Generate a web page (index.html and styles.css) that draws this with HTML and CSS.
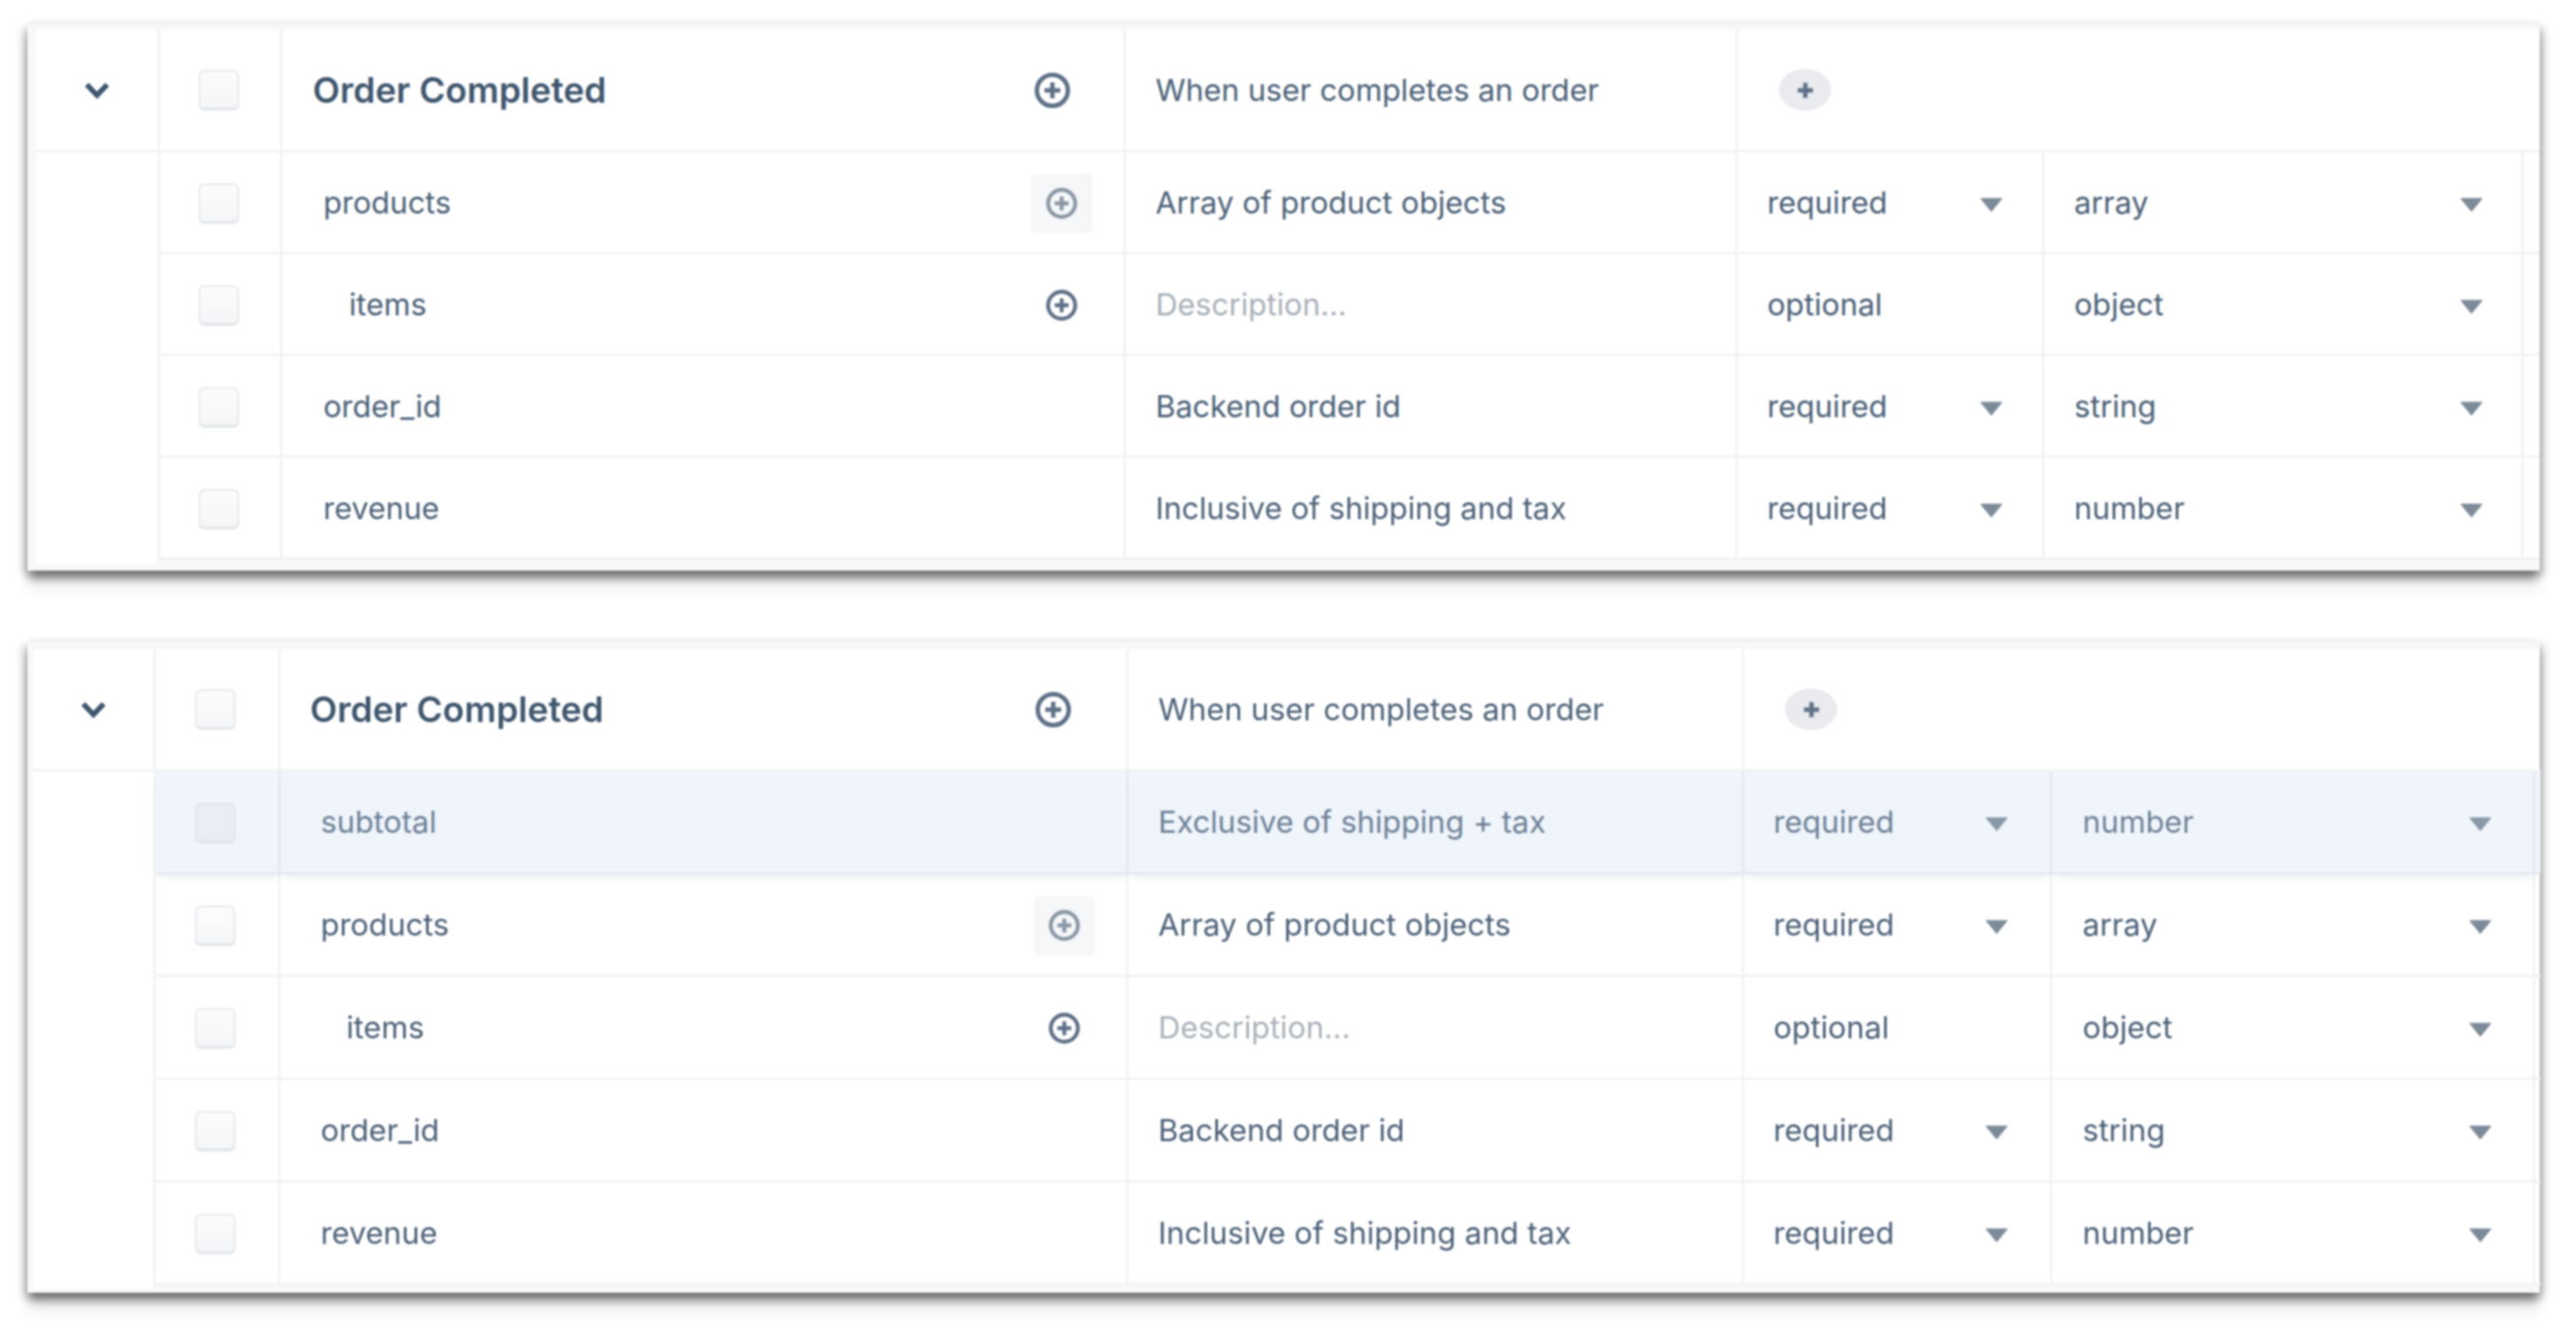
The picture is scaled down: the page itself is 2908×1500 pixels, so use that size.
FILE: index.html
```html
<!DOCTYPE html>
<html lang="en">
<head>
<meta charset="utf-8">
<title>Order Completed</title>
<link rel="stylesheet" href="styles.css">
</head>
<body>
<svg class="defs" width="0" height="0" aria-hidden="true">
  <symbol id="plus" viewBox="0 0 40 40">
    <circle cx="20" cy="20" r="17.5" fill="none" stroke="currentColor" stroke-width="5"/>
    <path d="M20 11v18M11 20h18" fill="none" stroke="currentColor" stroke-width="5"/>
  </symbol>
  <symbol id="cross" viewBox="0 0 18 18">
    <path d="M9 0.500v17M0.500 9h17" fill="none" stroke="currentColor" stroke-width="5"/>
  </symbol>
  <symbol id="chev" viewBox="0 0 29 20">
    <path d="M3 3.500l11.500 12L26 3.500" fill="none" stroke="currentColor" stroke-width="6"/>
  </symbol>
  <symbol id="tri" viewBox="0 0 24 15">
    <path d="M1 1h22L12 14.500z" fill="currentColor" stroke="currentColor" stroke-width="1" stroke-linejoin="round"/>
  </symbol>
</svg>
<main class="page">
  <section class="card card-a">
    <div class="row head">
      <div class="cell c-toggle"><svg class="chev"><use href="#chev"/></svg></div>
      <div class="cell c-check"><span class="box"></span></div>
      <div class="cell c-name"><span class="title">Order Completed</span><svg class="add add-lg"><use href="#plus"/></svg></div>
      <div class="cell c-head-desc">When user completes an order</div>
      <div class="cell c-tags"><span class="pill"><svg class="cross"><use href="#cross"/></svg></span></div>
    </div>
    <div class="row prop">
      <div class="cell c-toggle"></div>
      <div class="cell c-check"><span class="box"></span></div>
      <div class="cell c-name"><span class="pname">products</span><span class="add-btn"><svg class="add"><use href="#plus"/></svg></span></div>
      <div class="cell c-desc">Array of product objects</div>
      <div class="cell c-req">required<svg class="tri"><use href="#tri"/></svg></div>
      <div class="cell c-type">array<svg class="tri"><use href="#tri"/></svg></div>
      <div class="cell c-tail"></div>
    </div>
    <div class="row prop">
      <div class="cell c-toggle"></div>
      <div class="cell c-check"><span class="box"></span></div>
      <div class="cell c-name"><span class="pname nested">items</span><svg class="add add-row"><use href="#plus"/></svg></div>
      <div class="cell c-desc placeholder">Description...</div>
      <div class="cell c-req">optional</div>
      <div class="cell c-type">object<svg class="tri"><use href="#tri"/></svg></div>
      <div class="cell c-tail"></div>
    </div>
    <div class="row prop">
      <div class="cell c-toggle"></div>
      <div class="cell c-check"><span class="box"></span></div>
      <div class="cell c-name"><span class="pname">order_id</span></div>
      <div class="cell c-desc">Backend order id</div>
      <div class="cell c-req">required<svg class="tri"><use href="#tri"/></svg></div>
      <div class="cell c-type">string<svg class="tri"><use href="#tri"/></svg></div>
      <div class="cell c-tail"></div>
    </div>
    <div class="row prop">
      <div class="cell c-toggle"></div>
      <div class="cell c-check"><span class="box"></span></div>
      <div class="cell c-name"><span class="pname">revenue</span></div>
      <div class="cell c-desc">Inclusive of shipping and tax</div>
      <div class="cell c-req">required<svg class="tri"><use href="#tri"/></svg></div>
      <div class="cell c-type">number<svg class="tri"><use href="#tri"/></svg></div>
      <div class="cell c-tail"></div>
    </div>
  </section>

  <section class="card card-b">
    <div class="row head">
      <div class="cell c-toggle"><svg class="chev"><use href="#chev"/></svg></div>
      <div class="cell c-check"><span class="box"></span></div>
      <div class="cell c-name"><span class="title">Order Completed</span><svg class="add add-lg"><use href="#plus"/></svg></div>
      <div class="cell c-head-desc">When user completes an order</div>
      <div class="cell c-tags"><span class="pill"><svg class="cross"><use href="#cross"/></svg></span></div>
    </div>
    <div class="row prop active">
      <div class="cell c-toggle"></div>
      <div class="cell c-check"><span class="box"></span></div>
      <div class="cell c-name"><span class="pname">subtotal</span></div>
      <div class="cell c-desc">Exclusive of shipping + tax</div>
      <div class="cell c-req">required<svg class="tri"><use href="#tri"/></svg></div>
      <div class="cell c-type">number<svg class="tri"><use href="#tri"/></svg></div>
      <div class="cell c-tail"></div>
    </div>
    <div class="row prop">
      <div class="cell c-toggle"></div>
      <div class="cell c-check"><span class="box"></span></div>
      <div class="cell c-name"><span class="pname">products</span><span class="add-btn"><svg class="add"><use href="#plus"/></svg></span></div>
      <div class="cell c-desc">Array of product objects</div>
      <div class="cell c-req">required<svg class="tri"><use href="#tri"/></svg></div>
      <div class="cell c-type">array<svg class="tri"><use href="#tri"/></svg></div>
      <div class="cell c-tail"></div>
    </div>
    <div class="row prop">
      <div class="cell c-toggle"></div>
      <div class="cell c-check"><span class="box"></span></div>
      <div class="cell c-name"><span class="pname nested">items</span><svg class="add add-row"><use href="#plus"/></svg></div>
      <div class="cell c-desc placeholder">Description...</div>
      <div class="cell c-req">optional</div>
      <div class="cell c-type">object<svg class="tri"><use href="#tri"/></svg></div>
      <div class="cell c-tail"></div>
    </div>
    <div class="row prop">
      <div class="cell c-toggle"></div>
      <div class="cell c-check"><span class="box"></span></div>
      <div class="cell c-name"><span class="pname">order_id</span></div>
      <div class="cell c-desc">Backend order id</div>
      <div class="cell c-req">required<svg class="tri"><use href="#tri"/></svg></div>
      <div class="cell c-type">string<svg class="tri"><use href="#tri"/></svg></div>
      <div class="cell c-tail"></div>
    </div>
    <div class="row prop">
      <div class="cell c-toggle"></div>
      <div class="cell c-check"><span class="box"></span></div>
      <div class="cell c-name"><span class="pname">revenue</span></div>
      <div class="cell c-desc">Inclusive of shipping and tax</div>
      <div class="cell c-req">required<svg class="tri"><use href="#tri"/></svg></div>
      <div class="cell c-type">number<svg class="tri"><use href="#tri"/></svg></div>
      <div class="cell c-tail"></div>
    </div>
  </section>
</main>
</body>
</html>
```
FILE: styles.css
```css
* { box-sizing: border-box; }
html, body { margin: 0; background: #fff; }
body {
  width: 2908px;
  height: 1500px;
  overflow: hidden;
  font-family: Inter, "Liberation Sans", sans-serif;
  color: #4a5f76;
}
.defs { position: absolute; }
.page {
  padding: 26px 41px 0 31px;
  display: flex;
  flex-direction: column;
  gap: 79px;
  filter: blur(0.8px);
}
.card {
  background: #f7f9f9;
  border-top: 2px solid #f1f2f2;
  box-shadow:
    -5px 5px 9px rgba(50, 50, 50, .24),
    5px 5px 9px rgba(50, 50, 50, .24),
    0 11px 10px -2px rgba(50, 50, 50, .46),
    0 22px 14px rgba(60, 60, 60, .07),
    0 -5px 5px rgba(0, 0, 0, .02);
}
.card-a {
  --cols: 140px 138px 952px 691px 346px 541px 18px;
  --row-h: 115px;
  --row-top: 3px;
  --name-x: 46px;
  --desc-x: 33.5px;
  --req-x: 33px;
  --type-x: 33.5px;
  --req-end: 44.5px;
  --type-end: 43.5px;
  --head-x: 34px;
  --head-end: 60px;
  --head-lift: 0px;
  --check-end: 3px;
  padding: 6px 0 12px 10px;
  font-size: 34.4px;
}
.card-b {
  --cols: 138px 141px 957px 695px 348px 545px 6px;
  --row-h: 116px;
  --row-top: 2px;
  --name-x: 45px;
  --desc-x: 33.5px;
  --req-x: 33px;
  --type-x: 34px;
  --req-end: 47px;
  --type-end: 46px;
  --head-x: 33px;
  --head-end: 62px;
  --head-lift: 2px;
  --check-end: 5px;
  padding: 8px 0 8px 7px;
  font-size: 34.6px;
}
.row {
  display: grid;
  grid-template-columns: var(--cols);
  height: var(--row-h);
  background: #fff;
}
.row.head { height: 138px; }
.cell {
  display: flex;
  align-items: center;
  min-width: 0;
  border-right: 3px solid #f1f3f5;
  border-bottom: 3px solid #f1f3f5;
}
.prop .cell { padding-top: var(--row-top); }
.c-toggle { justify-content: center; color: #3f566d; }
.prop .c-toggle { border-bottom: none; background: #fff; }
.prop:last-child .c-toggle { margin-bottom: -4px; }
.c-check { justify-content: center; padding-right: var(--check-end); }
.c-name { justify-content: space-between; padding-left: var(--name-x); padding-right: 35px; }
.head .c-name { padding-left: var(--head-x); padding-right: var(--head-end); }
.c-desc, .c-head-desc { padding-left: var(--desc-x); }
.c-head-desc { padding-bottom: var(--head-lift); }
.c-desc, .c-req, .c-type, .pname { padding-bottom: 3px; }
.c-req { padding-left: var(--req-x); justify-content: space-between; padding-right: var(--req-end); }
.c-type { padding-left: var(--type-x); justify-content: space-between; padding-right: var(--type-end); }
.c-tail { border-right: none; }
.c-tags { grid-column: 5 / -1; border-right: none; padding-left: 46px; }
.title { font-size: 40px; font-weight: 600; color: #3f566d; }
.nested { margin-left: 29px; }
.placeholder { color: #a9b0b8; }
.box {
  display: block;
  width: 46px;
  height: 46px;
  border: 2px solid #e6e9ec;
  border-bottom-width: 4px;
  border-radius: 7px;
  background: linear-gradient(#fcfcfd, #f5f6f8);
}
.add { display: block; width: 35px; height: 35px; color: #5f7187; }
.add-lg { width: 40px; height: 40px; }
.add-row { margin-right: 17px; }
.add-btn {
  display: flex;
  align-items: center;
  justify-content: center;
  width: 69px;
  height: 68px;
  border-radius: 6px;
  background: #f5f7f9;
}
.add-btn .add { color: #8b97a5; }
.chev { display: block; width: 29px; height: 20px; }
.tri { display: block; width: 26px; height: 16px; margin-top: 6px; color: #7d8b99; }
.pill {
  display: flex;
  align-items: center;
  justify-content: center;
  width: 59px;
  height: 47px;
  border-radius: 50%;
  background: #e9ebee;
}
.cross { display: block; width: 18px; height: 18px; color: #5f7187; }
.active { position: relative; z-index: 1; color: #6d8096; }
.active .cell:not(.c-toggle) {
  background: #eff5fb;
  border-color: #e4eaf0;
  box-shadow: 0 7px 8px -4px rgba(120, 140, 160, .16);
}
.active .box { background: #e9eef4; border-color: #e0e6ec; }
.active .tri { color: #8a99a8; }
```
